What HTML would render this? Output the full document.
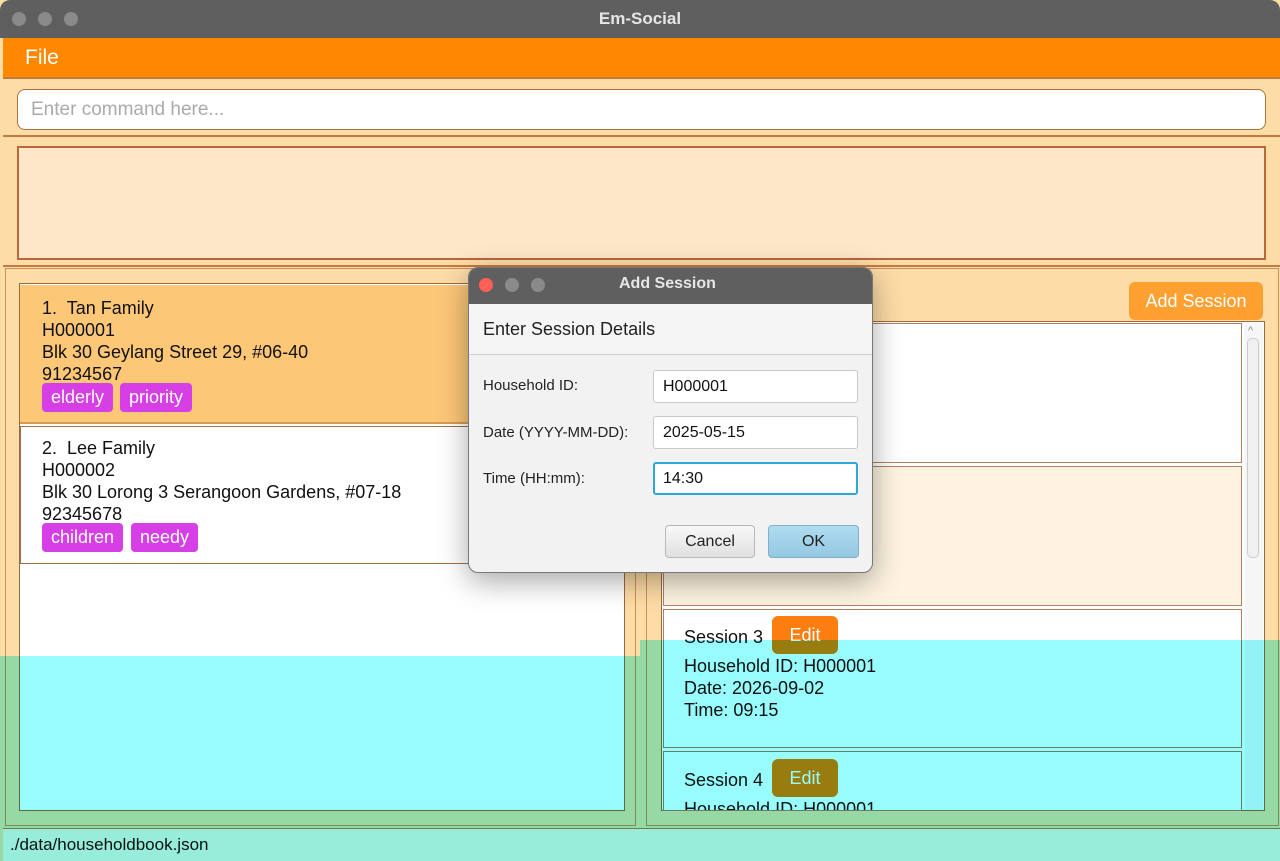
<!DOCTYPE html>
<html><head><meta charset="utf-8"><style>
*{margin:0;padding:0;box-sizing:border-box}
body{width:1280px;height:861px;position:relative;overflow:hidden;background:#fedca6;font-family:"Liberation Sans",sans-serif;color:#111}
.a{position:absolute}
.t{font-size:18px;line-height:22px;white-space:nowrap}
.tag{position:absolute;background:#d63fe6;color:#fff;font-size:18px;line-height:28px;height:29px;padding:0 9px;border-radius:4px}
.dot{position:absolute;width:14px;height:14px;border-radius:50%;background:#8a8a8a}
.inp{position:absolute;left:653px;width:205px;height:33px;background:#fff;border:1px solid #c8c8c8;border-radius:3px;font-size:16px;line-height:31px;padding-left:9px}
.lbl{position:absolute;left:483px;font-size:15px;color:#222}
</style></head><body>
<!-- title bar -->
<div class="a" style="left:0;top:0;width:1280px;height:38px;background:#5f5f5f;border-radius:10px 10px 0 0"></div>
<div class="dot" style="left:12px;top:12px"></div><div class="dot" style="left:38px;top:12px"></div><div class="dot" style="left:64px;top:12px"></div>
<div class="a" style="left:0;top:9px;width:1280px;text-align:center;color:#e6e6e6;font-weight:bold;font-size:17px">Em-Social</div>
<!-- menu -->
<div class="a" style="left:3px;top:38px;width:1277px;height:41px;background:#ff8800;border-bottom:2px solid #c47a40"></div>
<div class="a" style="left:25px;top:46px;color:#fff;font-size:21px">File</div>
<!-- command -->
<div class="a" style="left:3px;top:81px;width:1277px;height:56px;border-bottom:2px solid #c47a40"></div>
<div class="a" style="left:17px;top:89px;width:1249px;height:41px;background:#fff;border:1px solid #b0703f;border-radius:8px;color:#aaa;font-size:19px;line-height:39px;padding-left:13px">Enter command here...</div>
<!-- result -->
<div class="a" style="left:17px;top:146px;width:1249px;height:114px;background:#fee6c8;border:2px solid #b8683a"></div>
<div class="a" style="left:3px;top:265px;width:1277px;height:2px;background:#c47a40"></div>
<!-- left panel -->
<div class="a" style="left:5px;top:268px;width:631px;height:558px;border:1px solid #c8905a"></div>
<div class="a" style="left:19px;top:283px;width:606px;height:528px;background:#fff;border:1px solid #9a6a44"></div>
<div class="a" style="left:20px;top:285px;width:604px;height:139px;background:#fdc778;border-bottom:2px solid #d89a50"></div>
<div class="a t" style="left:42px;top:297px">1.&nbsp; Tan Family</div>
<div class="a t" style="left:42px;top:319px">H000001</div>
<div class="a t" style="left:42px;top:341px">Blk 30 Geylang Street 29, #06-40</div>
<div class="a t" style="left:42px;top:363px">91234567</div>
<div class="tag" style="left:42px;top:383px">elderly</div><div class="tag" style="left:120px;top:383px">priority</div>
<div class="a" style="left:20px;top:426px;width:604px;height:138px;background:#fff;border:1px solid #a0704a"></div>
<div class="a t" style="left:42px;top:437px">2.&nbsp; Lee Family</div>
<div class="a t" style="left:42px;top:459px">H000002</div>
<div class="a t" style="left:42px;top:481px">Blk 30 Lorong 3 Serangoon Gardens, #07-18</div>
<div class="a t" style="left:42px;top:503px">92345678</div>
<div class="tag" style="left:42px;top:523px">children</div><div class="tag" style="left:131px;top:523px">needy</div>
<!-- right panel -->
<div class="a" style="left:646px;top:268px;width:633px;height:558px;border:1px solid #c8905a"></div>
<div class="a" style="left:1129px;top:282px;width:134px;height:38px;background:#ffa030;border-radius:6px;color:#fff;font-size:18px;line-height:38px;text-align:center">Add Session</div>
<div class="a" style="left:661px;top:321px;width:604px;height:490px;background:#fff;border:1px solid #9a6a44"></div>
<div class="a" style="left:663px;top:323px;width:579px;height:140px;background:#fff;border:1px solid #b08060"></div>
<div class="a" style="left:663px;top:466px;width:579px;height:140px;background:#fef3e0;border:1px solid #b08060"></div>
<div class="a" style="left:663px;top:609px;width:579px;height:139px;background:#fff;border:1px solid #b08060"></div>
<div class="a" style="left:663px;top:751px;width:579px;height:60px;background:#fff;border:1px solid #b08060"></div>
<div class="a" style="left:1245px;top:323px;width:18px;height:487px;background:#f6f6f6"></div>
<div class="a" style="left:1247px;top:338px;width:12px;height:220px;background:#f0f0f0;border:1px solid #ccc;border-radius:5px"></div>
<div class="a" style="left:1248px;top:325px;font-size:11px;color:#888">^</div>
<div class="a t" style="left:684px;top:626px">Session 3</div>
<div class="a" style="left:772px;top:616px;width:66px;height:38px;background:#fd7e10;border-radius:6px;color:#fff;font-size:18px;line-height:38px;text-align:center">Edit</div>
<div class="a t" style="left:684px;top:655px">Household ID: H000001</div>
<div class="a t" style="left:684px;top:677px">Date: 2026-09-02</div>
<div class="a t" style="left:684px;top:699px">Time: 09:15</div>
<div class="a t" style="left:684px;top:769px">Session 4</div>
<div class="a" style="left:772px;top:759px;width:66px;height:38px;background:#fd7e10;border-radius:6px;color:#fff;font-size:18px;line-height:38px;text-align:center">Edit</div>
<div class="a" style="left:663px;top:797px;width:579px;height:13px;overflow:hidden"><div class="t" style="position:absolute;left:21px;top:1px">Household ID: H000001</div></div>
<!-- status -->
<div class="a" style="left:3px;top:828px;width:1277px;height:33px;background:#fff0dc;border-top:1px solid #c47a40"></div>
<div class="a" style="left:10px;top:835px;font-size:17px">./data/householdbook.json</div>
<!-- dialog -->
<div class="a" style="left:468px;top:267px;width:405px;height:306px;background:#f2f2f2;border-radius:10px;box-shadow:0 8px 30px rgba(0,0,0,.35);overflow:hidden;border:1px solid #777">
 <div class="a" style="left:0;top:0;width:405px;height:36px;background:#5f5f5f"></div>
 <div class="a" style="left:0;top:36px;width:405px;height:51px;background:#f5f5f5;border-bottom:1px solid #d0d0d0"></div>
</div>
<div class="dot" style="left:479px;top:278px;background:#fe5f57"></div><div class="dot" style="left:505px;top:278px"></div><div class="dot" style="left:531px;top:278px"></div>
<div class="a" style="left:619px;top:275px;color:#e6e6e6;font-weight:bold;font-size:16px">Add Session</div>
<div class="a" style="left:483px;top:319px;font-size:18px;color:#222">Enter Session Details</div>
<div class="lbl" style="top:377px">Household ID:</div>
<div class="lbl" style="top:424px">Date (YYYY-MM-DD):</div>
<div class="lbl" style="top:470px">Time (HH:mm):</div>
<div class="inp" style="top:370px">H000001</div>
<div class="inp" style="top:416px">2025-05-15</div>
<div class="inp" style="top:462px;border:2px solid #2fa8d8;line-height:29px;padding-left:8px">14:30</div>
<div class="a" style="left:665px;top:525px;width:90px;height:33px;background:linear-gradient(#f8f8f8,#e0e0e0);border:1px solid #b8b8b8;border-radius:4px;font-size:16px;line-height:31px;text-align:center;color:#222">Cancel</div>
<div class="a" style="left:768px;top:525px;width:91px;height:33px;background:linear-gradient(#b0dcf0,#94c8e2);border:1px solid #80b0cc;border-radius:4px;font-size:16px;line-height:31px;text-align:center;color:#222">OK</div>
<!-- cyan overlay (multiply) -->
<div class="a" style="left:0;top:656px;width:640px;height:205px;background:#98fcfd;mix-blend-mode:multiply"></div>
<div class="a" style="left:640px;top:640px;width:640px;height:221px;background:#98fcfd;mix-blend-mode:multiply"></div>
</body></html>
